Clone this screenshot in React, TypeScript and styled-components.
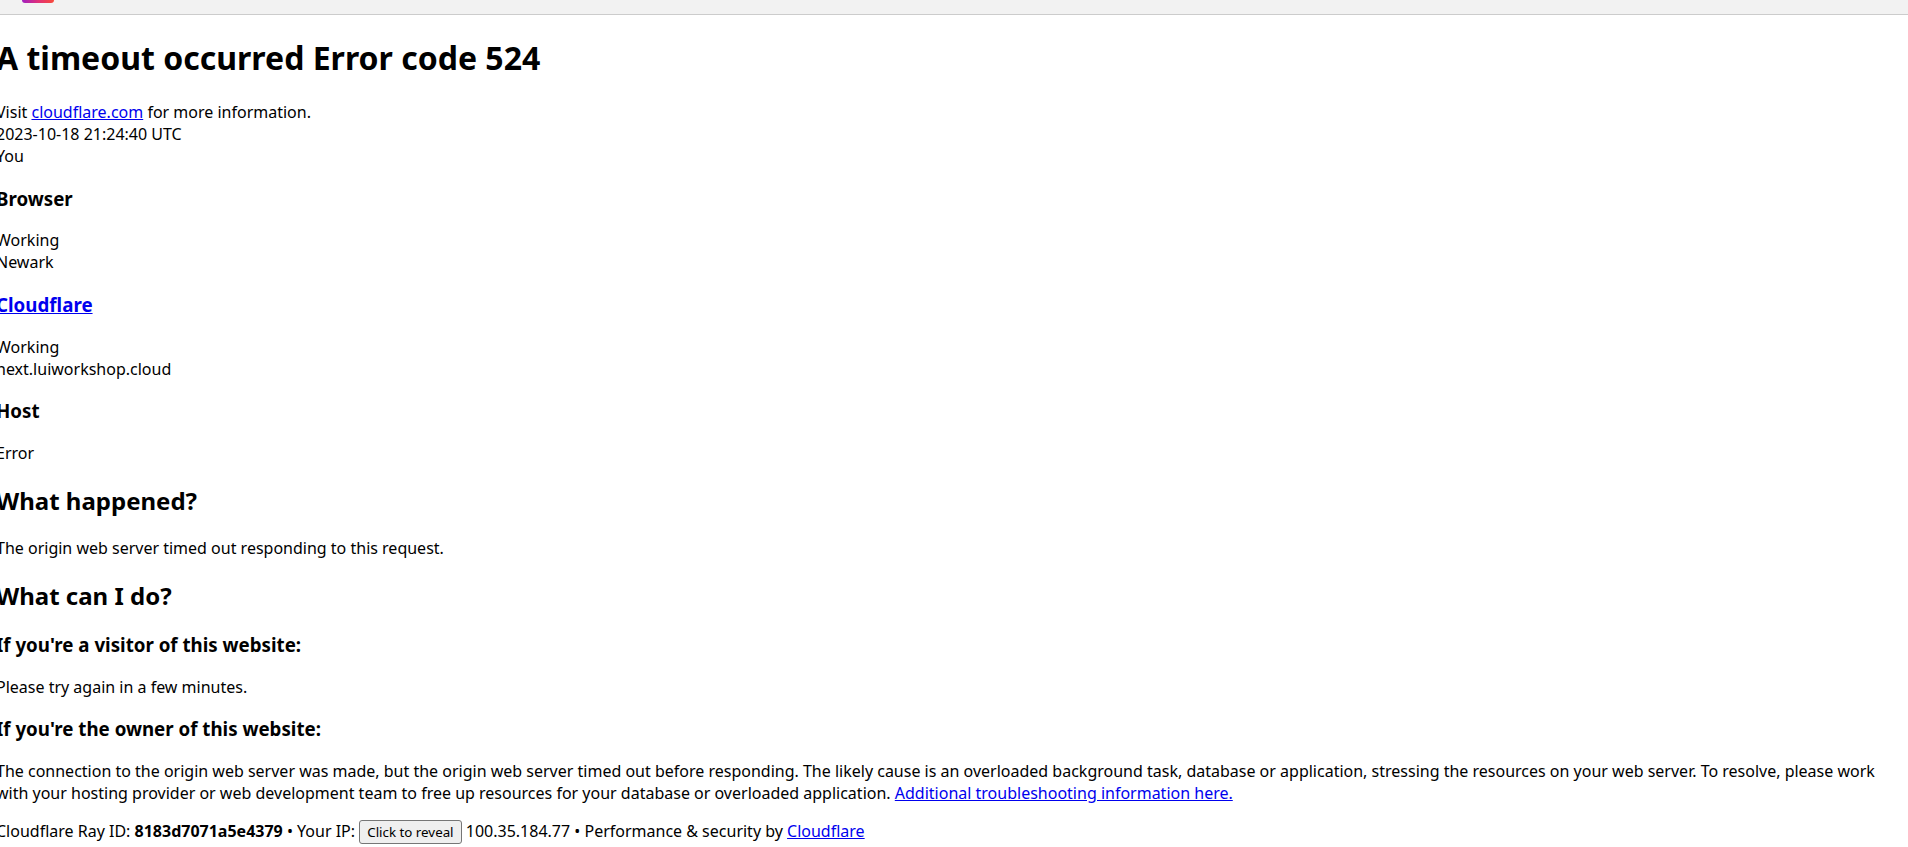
import React from "react";
import styled, { createGlobalStyle } from "styled-components";

const Global = createGlobalStyle`
  html, body { margin: 0; padding: 0; background: #fff; overflow: hidden; height: 847px; }
  body { font-family: "Noto Sans", sans-serif; font-size: 16px; color: #000; }
`;
const TopBar = styled.div`
  height: 14px; background: #f2f2f2; border-bottom: 1px solid #cccccc; padding-left: 22px; box-sizing: content-box;
`;
const Logo = styled.div`
  width: 32px; height: 3px; border-radius: 0 0 3px 3px;
  background: linear-gradient(90deg, #a020c0, #e0307a, #f84a3a);
`;
const Page = styled.main`
  margin-left: -4px; font-size: 16px;
`;
const H1 = styled.h1`
  font-size: 32px; font-weight: 700; margin: 21.44px 0;
`;
const H2 = styled.h2`
  font-size: 24px; font-weight: 700; margin: 19.92px 0;
`;
const H3 = styled.h3`
  font-size: 18.72px; font-weight: 700; margin: 18.72px 0;
`;
const Line = styled.div``;
const Para = styled.p`
  margin: 16px 0;
`;
const Link = styled.a`
  color: #0000ee; text-decoration: underline;
`;
const Reveal = styled.button`
  font-family: "Noto Sans", sans-serif; font-size: 13.33px; padding: 2px 7px;
  background: #efefef; color: #000; border: 1px solid #767676; border-radius: 3px;
`;

export default function App() {
  return (
    <>
      <Global />
      <TopBar><Logo /></TopBar>
      <Page>
        <H1>A timeout occurred Error code 524</H1>
        <Line>Visit <Link href="#">cloudflare.com</Link> for more information.</Line>
        <Line>2023-10-18 21:24:40 UTC</Line>
        <Line>You</Line>
        <H3>Browser</H3>
        <Line>Working</Line>
        <Line>Newark</Line>
        <H3><Link href="#">Cloudflare</Link></H3>
        <Line>Working</Line>
        <Line>next.luiworkshop.cloud</Line>
        <H3>Host</H3>
        <Line>Error</Line>
        <H2>What happened?</H2>
        <Para>The origin web server timed out responding to this request.</Para>
        <H2>What can I do?</H2>
        <H3>If you're a visitor of this website:</H3>
        <Para>Please try again in a few minutes.</Para>
        <H3>If you're the owner of this website:</H3>
        <Para>The connection to the origin web server was made, but the origin web server timed out before responding. The likely cause is an overloaded background task, database or application, stressing the resources on your web server. To resolve, please work with your hosting provider or web development team to free up resources for your database or overloaded application. <Link href="#">Additional troubleshooting information here.</Link></Para>
        <Para>Cloudflare Ray ID: <strong>8183d7071a5e4379</strong> • Your IP: <Reveal>Click to reveal</Reveal> 100.35.184.77 • Performance &amp; security by <Link href="#">Cloudflare</Link></Para>
      </Page>
    </>
  );
}
